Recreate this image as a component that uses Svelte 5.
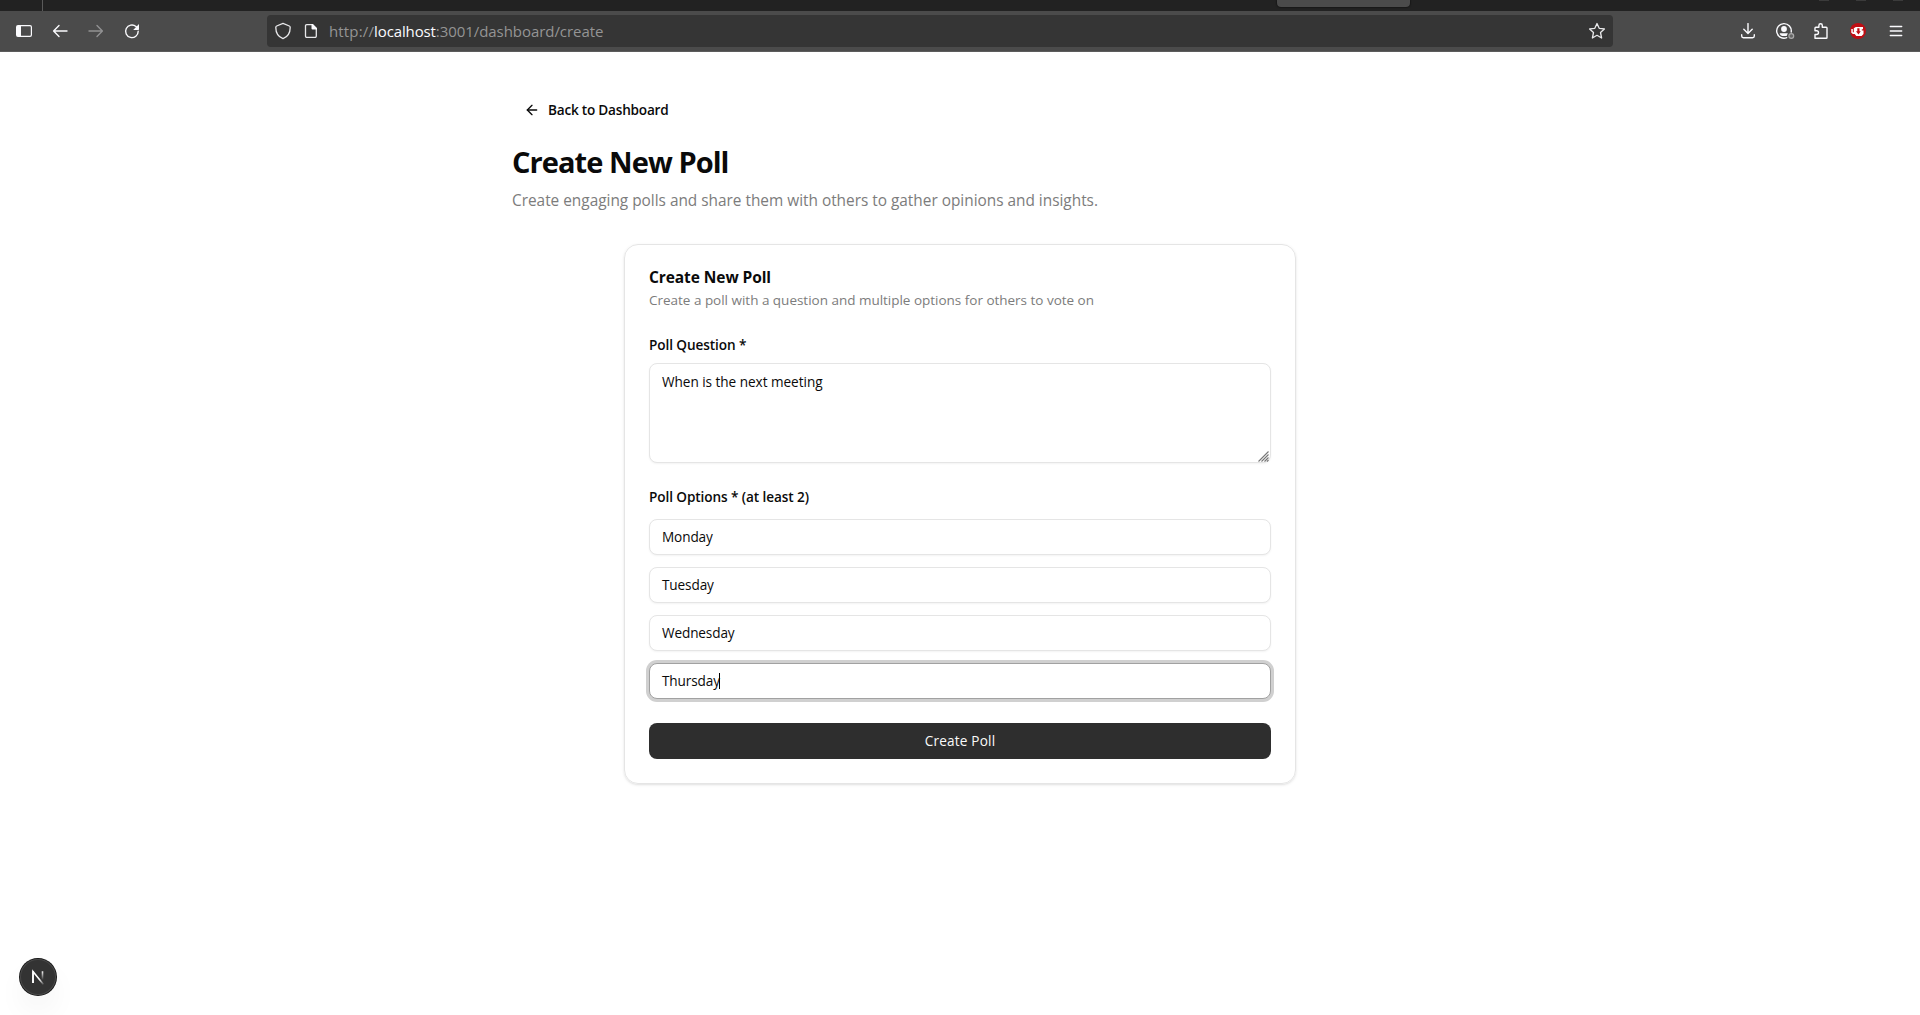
<script>
  const options = ['Monday', 'Tuesday', 'Wednesday', 'Thursday'];
  const focused = 3;
</script>

<div class="window">
  <div class="tabstrip">
    <span class="divider"></span>
    <span class="tab"></span>
    <span class="controls"><i></i><i></i><i></i></span>
  </div>

  <header class="toolbar">
    <nav class="nav">
      <svg width="16" height="16" viewBox="0 0 16 16"><path fill="#fbfbfe" fill-rule="evenodd" d="M2 2h12a2 2 0 0 1 2 2v8a2 2 0 0 1-2 2H2a2 2 0 0 1-2-2V4a2 2 0 0 1 2-2Zm3 1.3V12.7h9a.8.8 0 0 0 .8-.7V4a.8.8 0 0 0-.8-.7Z" /></svg>
      <svg width="16" height="16" viewBox="0 0 16 16"><path class="stroke" d="M15 8H1.8M7 2.6 1.6 8 7 13.4" /></svg>
      <svg class="dim" width="16" height="16" viewBox="0 0 16 16"><path class="stroke" d="M1 8h13.2M9 2.6 14.4 8 9 13.4" /></svg>
      <svg width="16" height="16" viewBox="0 0 16 16"><path class="stroke" d="M14.200 8.200A6.300 6.300 0 1 1 12 3.500l1.400 1.400" /><path fill="#fbfbfe" d="M15 1v5.300a.6.600 0 0 1-.6.600H9.200Z" /></svg>
    </nav>

    <div class="urlbar">
      <svg width="18" height="18" viewBox="0 0 18 18"><path class="thin" d="M9 1.400 15.300 4q.9.400.9 1.400c0 5.500-2.600 9.400-7.200 11.200C4.400 14.800 1.800 10.900 1.800 5.400q0-1 .9-1.400Z" /></svg>
      <svg class="doc" width="16" height="16" viewBox="0 0 16 16"><path class="thin" d="M3.700 1.700H9.500L13.300 5.500v7.600a1.200 1.200 0 0 1-1.200 1.200H3.700a1.200 1.200 0 0 1-1.200-1.200V2.900a1.200 1.200 0 0 1 1.200-1.200Z" /><path fill="#fbfbfe" d="M8.500 1h1.300L14 5.200v1.300H9.500a1 1 0 0 1-1-1Z" /></svg>
      <p class="url"><span class="scheme">http://</span><b>localhost</b><span class="path">:3001/dashboard/create</span></p>
      <svg class="star" width="18" height="18" viewBox="0 0 18 18"><path class="thin" d="m9 1.500 2.200 4.800 5.200.6-3.900 3.600 1.100 5.500L9 13.300 4.400 16l1.100-5.500L1.600 6.900l5.200-.6Z" /></svg>
    </div>

    <div class="actions">
      <svg width="16" height="16" viewBox="0 0 16 16"><path class="stroke" d="M8 .6v9.800M3.800 6.300 8 10.500l4.200-4.200M1.700 11.800v1.300a1.700 1.700 0 0 0 1.700 1.700h9.200a1.700 1.700 0 0 0 1.700-1.700v-1.300" /></svg>
      <svg class="account" width="20" height="18" viewBox="0 0 20 18"><path class="stroke" d="M11.700 15.700A7.300 7.300 0 1 1 16.200 10" /><circle cx="9" cy="7" r="2.900" fill="#fbfbfe" /><path fill="#fbfbfe" d="M4.600 11.200h8.200l-1.200 2.800H7Q5 13.500 4.600 11.200Z" /><circle cx="16.300" cy="14" r="2.400" fill="#666" stroke="#aaa" stroke-width="1.200" /></svg>
      <svg class="puzzle" width="18" height="18" viewBox="0 0 18 18"><path class="stroke" d="M3 16.200V12.500h1.600a1.900 1.900 0 0 0 0-3.800H3V6q0-.8.8-.8h3.100V3.400a1.700 1.700 0 0 1 3.400 0v1.800h3.900q.8 0 .8.800v9.500q0 .8-.8.800H3.600Z" /></svg>
      <svg class="blocker" width="16" height="16" viewBox="0 0 16 16"><circle cx="8" cy="8" r="8" fill="#bf0e14" /><path d="M1.300 6h1.500v3.200h1V5.200L5.800 4H13v2.300h-1.200v1.200h1.700v3.600L11.600 13H6.300L4.700 11H2.900L1.300 9.800Z" fill="#fff" /><path d="M7.300 5.200h2.200v3.100h1.300L8.400 11.500 6 8.300h1.300Z" fill="#bf0e14" /></svg>
      <svg class="menu" width="16" height="16" viewBox="0 0 16 16"><path class="stroke" d="M2.300 3.500h11.400M2.300 8h11.400M2.300 12.500h11.400" /></svg>
    </div>
  </header>

  <main class="page">
    <div class="content">
      <a class="back" href="#back">
        <svg width="16" height="16" viewBox="0 0 24 24" fill="none" stroke="#0a0a0a" stroke-width="2" stroke-linecap="round" stroke-linejoin="round"><path d="m12 19-7-7 7-7" /><path d="M19 12H5" /></svg>
        <span>Back to Dashboard</span>
      </a>
      <h1>Create New Poll</h1>
      <p class="lead">Create engaging polls and share them with others to gather opinions and insights.</p>

      <section class="card">
        <h2>Create New Poll</h2>
        <p class="desc">Create a poll with a question and multiple options for others to vote on</p>

        <div class="label question">Poll Question *</div>
        <div class="textarea" role="textbox" aria-multiline="true">
          <span>When is the next meeting</span>
          <svg class="grip" width="11" height="11" viewBox="0 0 11 11"><path d="M.5 10.500l10-10M3.500 10.500l7-7M6.500 10.500l4-4M9 10.500l1.500-1.500" stroke="#777" stroke-width="1.100" /></svg>
        </div>

        <div class="label choices">Poll Options * (at least 2)</div>
        <div class="options">
          {#each options as option, i}
            <div class="input" class:focused={i === focused} role="textbox">
              <span>{option}</span>{#if i === focused}<i class="caret"></i>{/if}
            </div>
          {/each}
        </div>

        <button type="button">Create Poll</button>
      </section>
    </div>

    <div class="badge">
      <svg width="36" height="36" viewBox="0 0 36 36">
        <defs>
          <linearGradient id="diag" x1="17" y1="18" x2="24" y2="26" gradientUnits="userSpaceOnUse"><stop offset="0.3" stop-color="#fff" /><stop offset="1" stop-color="#fff" stop-opacity="0" /></linearGradient>
          <linearGradient id="stem" x1="0" y1="12" x2="0" y2="21" gradientUnits="userSpaceOnUse"><stop stop-color="#fff" /><stop offset="1" stop-color="#fff" stop-opacity="0" /></linearGradient>
        </defs>
        <path d="M13 24V12.500L23.500 25.500" fill="none" stroke="url(#diag)" stroke-width="1.600" />
        <path d="M13 24V12.300" stroke="#fff" stroke-width="1.600" />
        <path d="M22.500 12.300v8.700" stroke="url(#stem)" stroke-width="1.600" />
      </svg>
    </div>
  </main>
</div>

<style>
  :global(body) { margin: 0; background: #fff; }
  * { box-sizing: border-box; }
  .window { display: flex; flex-direction: column; height: 1015px; overflow: hidden; font-family: 'Open Sans', 'Noto Sans', sans-serif; color: #0a0a0a; }
  h1, h2, p { margin: 0; }
  svg { display: block; flex: none; }

  .tabstrip { display: flex; align-items: flex-start; height: 11px; background: #222; flex: none; }
  .divider { width: 1px; height: 11px; margin-left: 42px; background: #5a5a5a; }
  .tab { width: 133px; height: 7px; margin-left: 1234px; border-radius: 0 0 4px 4px; background: #4b4b4b; box-shadow: 0 0 2px #000; }
  .controls { display: flex; gap: 27px; margin-left: 409px; }
  .controls i { width: 10px; height: 1px; background: #3b3b3b; }

  .toolbar { display: flex; align-items: center; height: 41px; padding: 0 16px 1px; background: #4b4b4b; border-bottom: 1px solid #5c5c5c; flex: none; }
  .nav { display: flex; gap: 20px; width: 251px; }
  .dim { opacity: 0.4; }
  .stroke { fill: none; stroke: #fbfbfe; stroke-width: 1.4; stroke-linecap: round; stroke-linejoin: round; }
  .thin { fill: none; stroke: #e8e8ea; stroke-width: 1.3; stroke-linejoin: round; }
  .urlbar { display: flex; align-items: center; width: 1346px; height: 32px; padding: 0 7px; border-radius: 4px; background: #353535; }
  .doc { margin-left: 11px; }
  .url { margin-left: 10px; font-size: 15px; line-height: 20px; color: #949494; white-space: nowrap; }
  .scheme { letter-spacing: 0.15px; }
  .url b { font-weight: 400; color: #fbfbfe; letter-spacing: -0.12px; }
  .path { letter-spacing: -0.06px; }
  .star { margin-left: auto; }
  .actions { display: flex; align-items: center; margin-left: auto; }
  .account { margin-left: 19px; }
  .puzzle { margin-left: 17px; }
  .blocker { margin-left: 20px; }
  .menu { margin-left: 22px; }

  .page { position: relative; flex: 1; }
  .content { display: flex; flex-direction: column; align-items: flex-start; width: 896px; margin: 0 auto; padding-top: 40px; }
  .back { display: flex; align-items: center; gap: 8px; height: 36px; padding: 0 12px; font-size: 13.6px; font-weight: 560; letter-spacing: -0.22px; color: inherit; text-decoration: none; }
  .back span { padding-bottom: 2px; }
  h1 { margin-top: 16px; font-size: 29px; line-height: 36px; font-weight: 700; letter-spacing: -0.93px; }
  .lead { margin-top: 9px; font-size: 15.4px; line-height: 24px; letter-spacing: -0.01px; color: #7c7c7c; }

  .card { display: flex; flex-direction: column; align-self: center; width: 672px; margin-top: 31px; padding: 24px; border: 1px solid #e5e5e5; border-radius: 14px; box-shadow: 0 1px 3px rgba(0, 0, 0, 0.1), 0 1px 2px -1px rgba(0, 0, 0, 0.1); }
  h2 { font-size: 15.5px; line-height: 16px; font-weight: 680; letter-spacing: -0.08px; }
  .desc { margin-top: 5px; font-size: 13.5px; line-height: 20px; letter-spacing: -0.015px; color: #7c7c7c; }
  .label { font-size: 13.6px; line-height: 20px; font-weight: 560; letter-spacing: -0.09px; }
  .question { margin-top: 25px; }
  .choices { margin-top: 24px; }
  .textarea, .input { position: relative; padding: 7px 12px; border: 1px solid #e5e5e5; border-radius: 8px; background: #fff; font-size: 13.6px; line-height: 20px; letter-spacing: -0.04px; box-shadow: 0 1px 2px rgba(0, 0, 0, 0.05); }
  .textarea { height: 100px; margin-top: 8px; padding-top: 8px; }
  .grip { position: absolute; right: 1px; bottom: 0; }
  .options { display: flex; flex-direction: column; gap: 12px; margin-top: 12px; }
  .input { display: flex; height: 36px; letter-spacing: -0.12px; }
  .focused { border-color: #a1a1a1; box-shadow: 0 0 0 3px #d0d0d0; }
  .caret { width: 1px; height: 16px; margin: 2px 0 0 -1px; background: #000; }
  button { height: 36px; margin-top: 24px; padding: 0 0 2px; border: 0; border-radius: 8px; background: #2e2e2e; color: #fafafa; font: 500 13.6px 'Open Sans', sans-serif; letter-spacing: 0.2px; }

  .badge { position: absolute; left: 20px; bottom: 20px; width: 36px; height: 36px; border-radius: 50%; background: #333; box-shadow: inset 0 0 0 1px #484848, 0 0 0 1px #171717, 0 16px 32px -8px rgba(0, 0, 0, 0.14); }
</style>
